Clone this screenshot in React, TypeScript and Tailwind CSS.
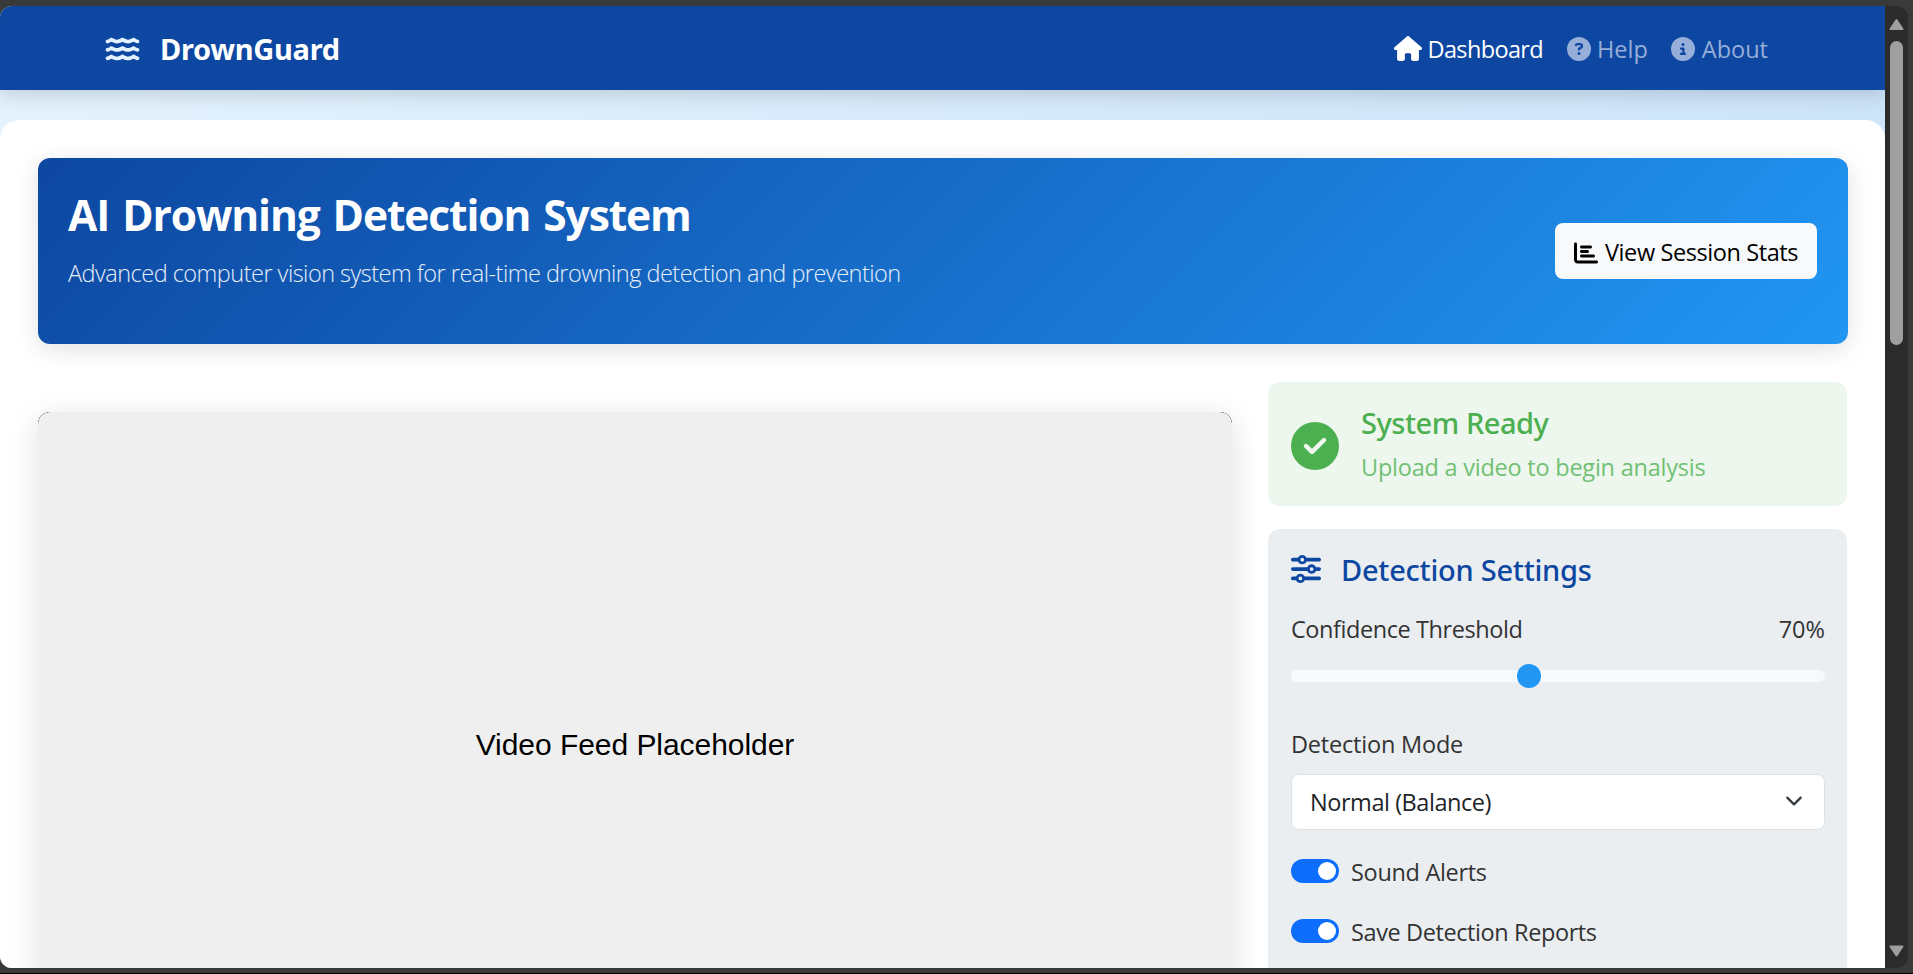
import type { ReactNode } from 'react';
import {
  FaChartBar,
  FaCircleCheck,
  FaCircleInfo,
  FaCircleQuestion,
  FaHouse,
  FaSliders,
  FaWater,
} from 'react-icons/fa6';

function Navbar() {
  return (
    <nav className="relative z-10 flex h-[84px] shrink-0 items-center bg-[#0d47a1] pr-[117px] pl-[105px] pt-0.5 shadow-[0_5px_19px_rgba(0,0,0,0.15)]">
      <div className="flex items-center text-white">
        <FaWater className="-mt-px h-[30px] w-[35px] text-[#e3f2fd]" />
        <span className="ml-5 font-['Noto_Sans',sans-serif] text-[29px] leading-9 font-bold tracking-[-0.3px]">
          DrownGuard
        </span>
      </div>
      <div className="ml-auto flex items-center text-[23.5px] leading-9">
        <a className="flex items-center text-white">
          <FaHouse className="-mt-px h-[25px] w-[28px]" />
          <span className="ml-[6px] tracking-[-0.65px]">Dashboard</span>
        </a>
        <a className="ml-[24px] flex items-center text-[#96aed8]">
          <FaCircleQuestion className="size-6" />
          <span className="ml-[6px]">Help</span>
        </a>
        <a className="ml-[23px] flex items-center text-[#96aed8]">
          <FaCircleInfo className="size-6" />
          <span className="ml-[7px]">About</span>
        </a>
      </div>
    </nav>
  );
}

function Hero() {
  return (
    <header className="flex h-[186px] shrink-0 items-center justify-between rounded-[12px] bg-[linear-gradient(135deg,#0d47a1_0%,#2196f3_100%)] px-[31px] shadow-[0_5px_25px_rgba(0,0,0,0.12)]">
      <div className="flex h-full flex-col pt-[30px] text-white">
        <h1 className="-ml-px text-[42.5px] leading-[53px] font-bold tracking-[-1.1px] [word-spacing:3px]">
          AI Drowning Detection System
        </h1>
        <p className="mt-[14px] -ml-px text-[23.5px] leading-9 font-light tracking-[-0.52px] text-white/90">
          Advanced computer vision system for real-time drowning detection and prevention
        </p>
      </div>
      <button className="flex h-14 w-[262px] items-center rounded-[8px] bg-[#f8f9fa] pl-[19px] text-[23.5px] tracking-[-0.41px] text-black">
        <FaChartBar className="mt-[3px] size-6" />
        <span className="mt-[3px] ml-[7px]">View Session Stats</span>
      </button>
    </header>
  );
}

function StatusCard() {
  return (
    <section className="flex h-[124px] items-center rounded-[12px] bg-[#edf7ed] pl-[23px] text-[#4caf50]">
      <FaCircleCheck className="mt-1 size-12 text-[#4caf50]" />
      <div className="ml-[22px] pt-0.5">
        <h2 className="font-['Noto_Sans',sans-serif] text-[29px] leading-9 font-medium tracking-[-0.46px]">
          System Ready
        </h2>
        <p className="mt-2 text-[23.5px] leading-9 tracking-[-0.23px] text-[#71c074]">Upload a video to begin analysis</p>
      </div>
    </section>
  );
}

function Toggle({ children }: { children: ReactNode }) {
  return (
    <div className="flex h-9 items-center">
      <div className="-mt-0.5 flex h-6 w-12 items-center justify-end rounded-full bg-[#0d6efd] pr-[3px]">
        <div className="size-[18px] rounded-full bg-white" />
      </div>
      {children}
    </div>
  );
}

function SettingsCard() {
  return (
    <section className="h-[460px] shrink-0 rounded-t-[12px] bg-[#eaeef1] pr-[22px] pl-[23px] pt-[23px] text-[23.5px] leading-9 text-[#333333]">
      <div className="flex items-center text-[#0d47a1]">
        <FaSliders className="-mt-[3px] size-[30px]" />
        <h2 className="ml-5 font-['Noto_Sans',sans-serif] text-[29px] leading-9 font-medium tracking-[-0.25px]">
          Detection Settings
        </h2>
      </div>
      <div className="mt-[23px] flex justify-between">
        <span className="tracking-[-0.43px]">Confidence Threshold</span>
        <span>70%</span>
      </div>
      <div className="mt-[17px] flex h-6 items-center">
        <div className="flex h-3 w-full items-center rounded-full bg-[#f8f9fa] pl-[226px]">
          <div className="size-6 shrink-0 rounded-full bg-[#2196f3]" />
        </div>
      </div>
      <div className="mt-[38px] tracking-[-0.2px]">Detection Mode</div>
      <div className="mt-[12px] flex h-14 items-center justify-between rounded-[8px] border border-[#dee2e6] bg-white pr-[21px] pl-[18px] text-[#212529]">
        <span className="tracking-[-0.45px]">Normal (Balance)</span>
        <svg className="-mt-0.5 size-[18px]" viewBox="0 0 16 16" fill="none" stroke="#343a40" strokeWidth="2" strokeLinecap="round" strokeLinejoin="round">
          <path d="m2 5 6 6 6-6" />
        </svg>
      </div>
      <div className="mt-6">
        <Toggle>
          <span className="ml-3 tracking-[-0.32px]">Sound Alerts</span>
        </Toggle>
      </div>
      <div className="mt-6">
        <Toggle>
          <span className="ml-3 tracking-[-0.4px]">Save Detection Reports</span>
        </Toggle>
      </div>
    </section>
  );
}

function VideoFeed() {
  return (
    <div className="mt-[30px] h-[672px] w-[1194px] shrink-0 overflow-hidden rounded-[12px] bg-black shadow-[0_6px_31px_rgba(0,0,0,0.12)]">
      <div className="flex h-full items-center justify-center rounded-[12px] bg-[#efefef] font-['Liberation_Sans',Arial,sans-serif] text-[30px] tracking-[-0.05px] text-black">
        <span className="-mt-2">Video Feed Placeholder</span>
      </div>
    </div>
  );
}

function Scrollbar() {
  return (
    <div className="flex w-[23px] shrink-0 flex-col items-center bg-[#2b2b2b] pt-[12px] pb-[11px]">
      <svg className="h-3 w-[15px] shrink-0" viewBox="0 0 15 12" fill="#9f9f9f" stroke="#9f9f9f" strokeWidth="2" strokeLinejoin="round">
        <path d="M7.5 2 13.5 11h-12z" />
      </svg>
      <div className="mt-[11px] h-[304px] w-[13px] shrink-0 rounded-full bg-[#9f9f9f]" />
      <svg className="mt-auto h-3 w-[15px] shrink-0" viewBox="0 0 15 12" fill="#9f9f9f" stroke="#9f9f9f" strokeWidth="2" strokeLinejoin="round">
        <path d="M7.5 10.5 13.5 1.5h-12z" />
      </svg>
    </div>
  );
}

export default function App() {
  return (
    <div className="h-[974px] w-[1913px] overflow-hidden border-b border-black bg-[#3a3a3a] pt-1.5 pr-[5px] font-['Open_Sans',sans-serif]">
      <div className="flex h-[962px] overflow-hidden rounded-[12px]">
        <div className="flex w-[1885px] shrink-0 flex-col overflow-hidden bg-[linear-gradient(90deg,#e3f2fd,#cde4f9)]">
          <Navbar />
          <main className="mt-[30px] flex min-h-0 flex-1 flex-col overflow-hidden rounded-t-[19px] bg-white pr-[37px] pl-[38px] pt-[38px]">
            <Hero />
            <div className="mt-[38px] flex justify-between">
              <VideoFeed />
              <aside className="mr-px flex w-[579px] flex-col gap-[23px]">
                <StatusCard />
                <SettingsCard />
              </aside>
            </div>
          </main>
        </div>
        <Scrollbar />
      </div>
    </div>
  );
}
